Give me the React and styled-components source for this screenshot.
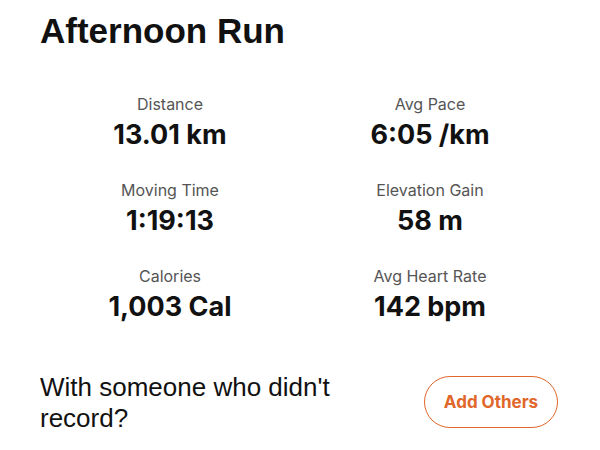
import React from "react";
import styled, { createGlobalStyle } from "styled-components";

const stats = [
  { label: "Distance", value: "13.01 km" },
  { label: "Avg Pace", value: "6:05 /km" },
  { label: "Moving Time", value: "1:19:13" },
  { label: "Elevation Gain", value: "58 m" },
  { label: "Calories", value: "1,003 Cal" },
  { label: "Avg Heart Rate", value: "142 bpm" },
];

export default function App() {
  return (
    <>
      <GlobalStyle />
      <Page>
        <Title>Afternoon Run</Title>
        <StatsGrid>
          {stats.map((s) => (
            <Stat key={s.label}>
              <Label>{s.label}</Label>
              <Value>{s.value}</Value>
            </Stat>
          ))}
        </StatsGrid>
        <Footer>
          <Prompt>
            With someone who didn't
            <br />
            record?
          </Prompt>
          <OutlineButton>Add Others</OutlineButton>
        </Footer>
      </Page>
    </>
  );
}

const GlobalStyle = createGlobalStyle`
  body {
    margin: 0;
    background: #fff;
    font-family: Inter, "Liberation Sans", sans-serif;
  }
`;

const Page = styled.div`
  padding: 11px 42px 0 40px;
  display: flex;
  flex-direction: column;
`;

const Title = styled.h1`
  margin: 0;
  font-family: "Liberation Sans", Arial, sans-serif;
  font-weight: 700;
  font-size: 35px;
  line-height: 40px;
  color: #111;
`;

const StatsGrid = styled.div`
  display: grid;
  grid-template-columns: 1fr 1fr;
  row-gap: 29px;
  margin: 43px -2px 0 0;
`;

const Stat = styled.div`
  display: flex;
  flex-direction: column;
  align-items: center;
  gap: 5px;
`;

const Label = styled.div`
  font-size: 16px;
  line-height: 20px;
  color: #555;
`;

const Value = styled.div`
  font-size: 27px;
  line-height: 32px;
  font-weight: 700;
  color: #111;
`;

const Footer = styled.div`
  display: flex;
  justify-content: space-between;
  align-items: center;
  margin-top: 46px;
`;

const Prompt = styled.p`
  margin: 0;
  padding-top: 3px;
  font-family: "Liberation Sans", Arial, sans-serif;
  font-size: 26px;
  line-height: 31px;
  color: #111;
`;

const OutlineButton = styled.button`
  width: 134px;
  height: 52px;
  border: 1.5px solid #e0662a;
  border-radius: 26px;
  background: #fff;
  color: #e0662a;
  font-family: Inter, sans-serif;
  font-weight: 700;
  font-size: 17px;
  cursor: pointer;
`;
